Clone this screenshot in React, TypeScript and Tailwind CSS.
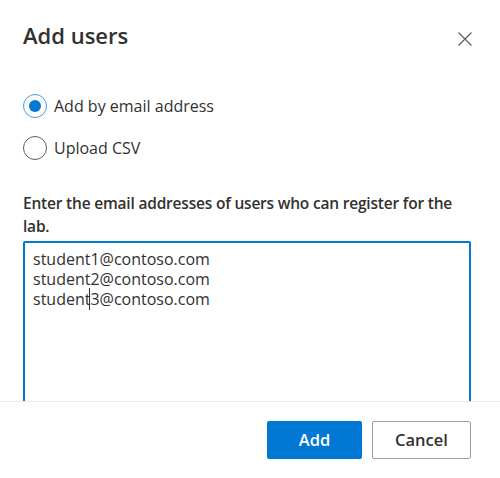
import React from "react";

function Radio({ checked, label }: { checked: boolean; label: string }) {
  return (
    <div className="flex items-center h-[24px]">
      <div
        className={
          checked
            ? "w-[24px] h-[24px] rounded-full border border-[#4a9be0] flex items-center justify-center"
            : "w-[24px] h-[24px] rounded-full border border-[#605e5c] flex items-center justify-center"
        }
      >
        {checked && <div className="w-[12px] h-[12px] rounded-full bg-[#0078d4]" />}
      </div>
      <span className="ml-[7px] text-[16px] text-[#323130] leading-[24px]">{label}</span>
    </div>
  );
}

export default function App() {
  return (
    <div className="w-[500px] h-[478px] bg-white flex flex-col font-['Open_Sans',sans-serif]">
      <div className="flex-1 overflow-hidden pl-[23px] pr-[29px]">
        <div className="flex items-center justify-between pt-[24px] h-[56px]">
          <h1 className="text-[22px] font-semibold text-[#323130] leading-[28px] mt-[-10px]">Add users</h1>
          <svg width="16" height="16" viewBox="0 0 16 16" className="mr-[-2px] mt-[-2px]">
            <path d="M1.5 1.5 L14.5 14.5 M14.5 1.5 L1.5 14.5" stroke="#605e5c" strokeWidth="1.2" fill="none" />
          </svg>
        </div>
        <div className="mt-[38px] flex flex-col gap-[18px]">
          <Radio checked label="Add by email address" />
          <Radio checked={false} label="Upload CSV" />
        </div>
        <p className="mt-[32px] text-[15.5px] tracking-[-0.2px] font-semibold text-[#323130] leading-[23px]">
          Enter the email addresses of users who can register for the lab.
        </p>
        <div className="mt-[3px] h-[220px] border-2 border-[#0078d4] rounded-[2px] px-[8px] pt-[6px] text-[16px] leading-[20px] text-[#323130]">
          <div>student1@contoso.com</div>
          <div>student2@contoso.com</div>
          <div>
            student<span className="border-l border-[#323130] ml-[-1px]"></span>3@contoso.com
          </div>
        </div>
      </div>
      <div className="h-[77px] border-t border-[#edebe9] flex justify-end items-start pt-[19px] pr-[29px] gap-[10px]">
        <button className="w-[95px] h-[38px] bg-[#0078d4] text-white rounded-[2px] text-[16.5px] font-semibold">
          Add
        </button>
        <button className="w-[99px] h-[38px] bg-white border border-[#a19f9d] text-[#323130] rounded-[2px] text-[16.5px] font-semibold">
          Cancel
        </button>
      </div>
    </div>
  );
}
